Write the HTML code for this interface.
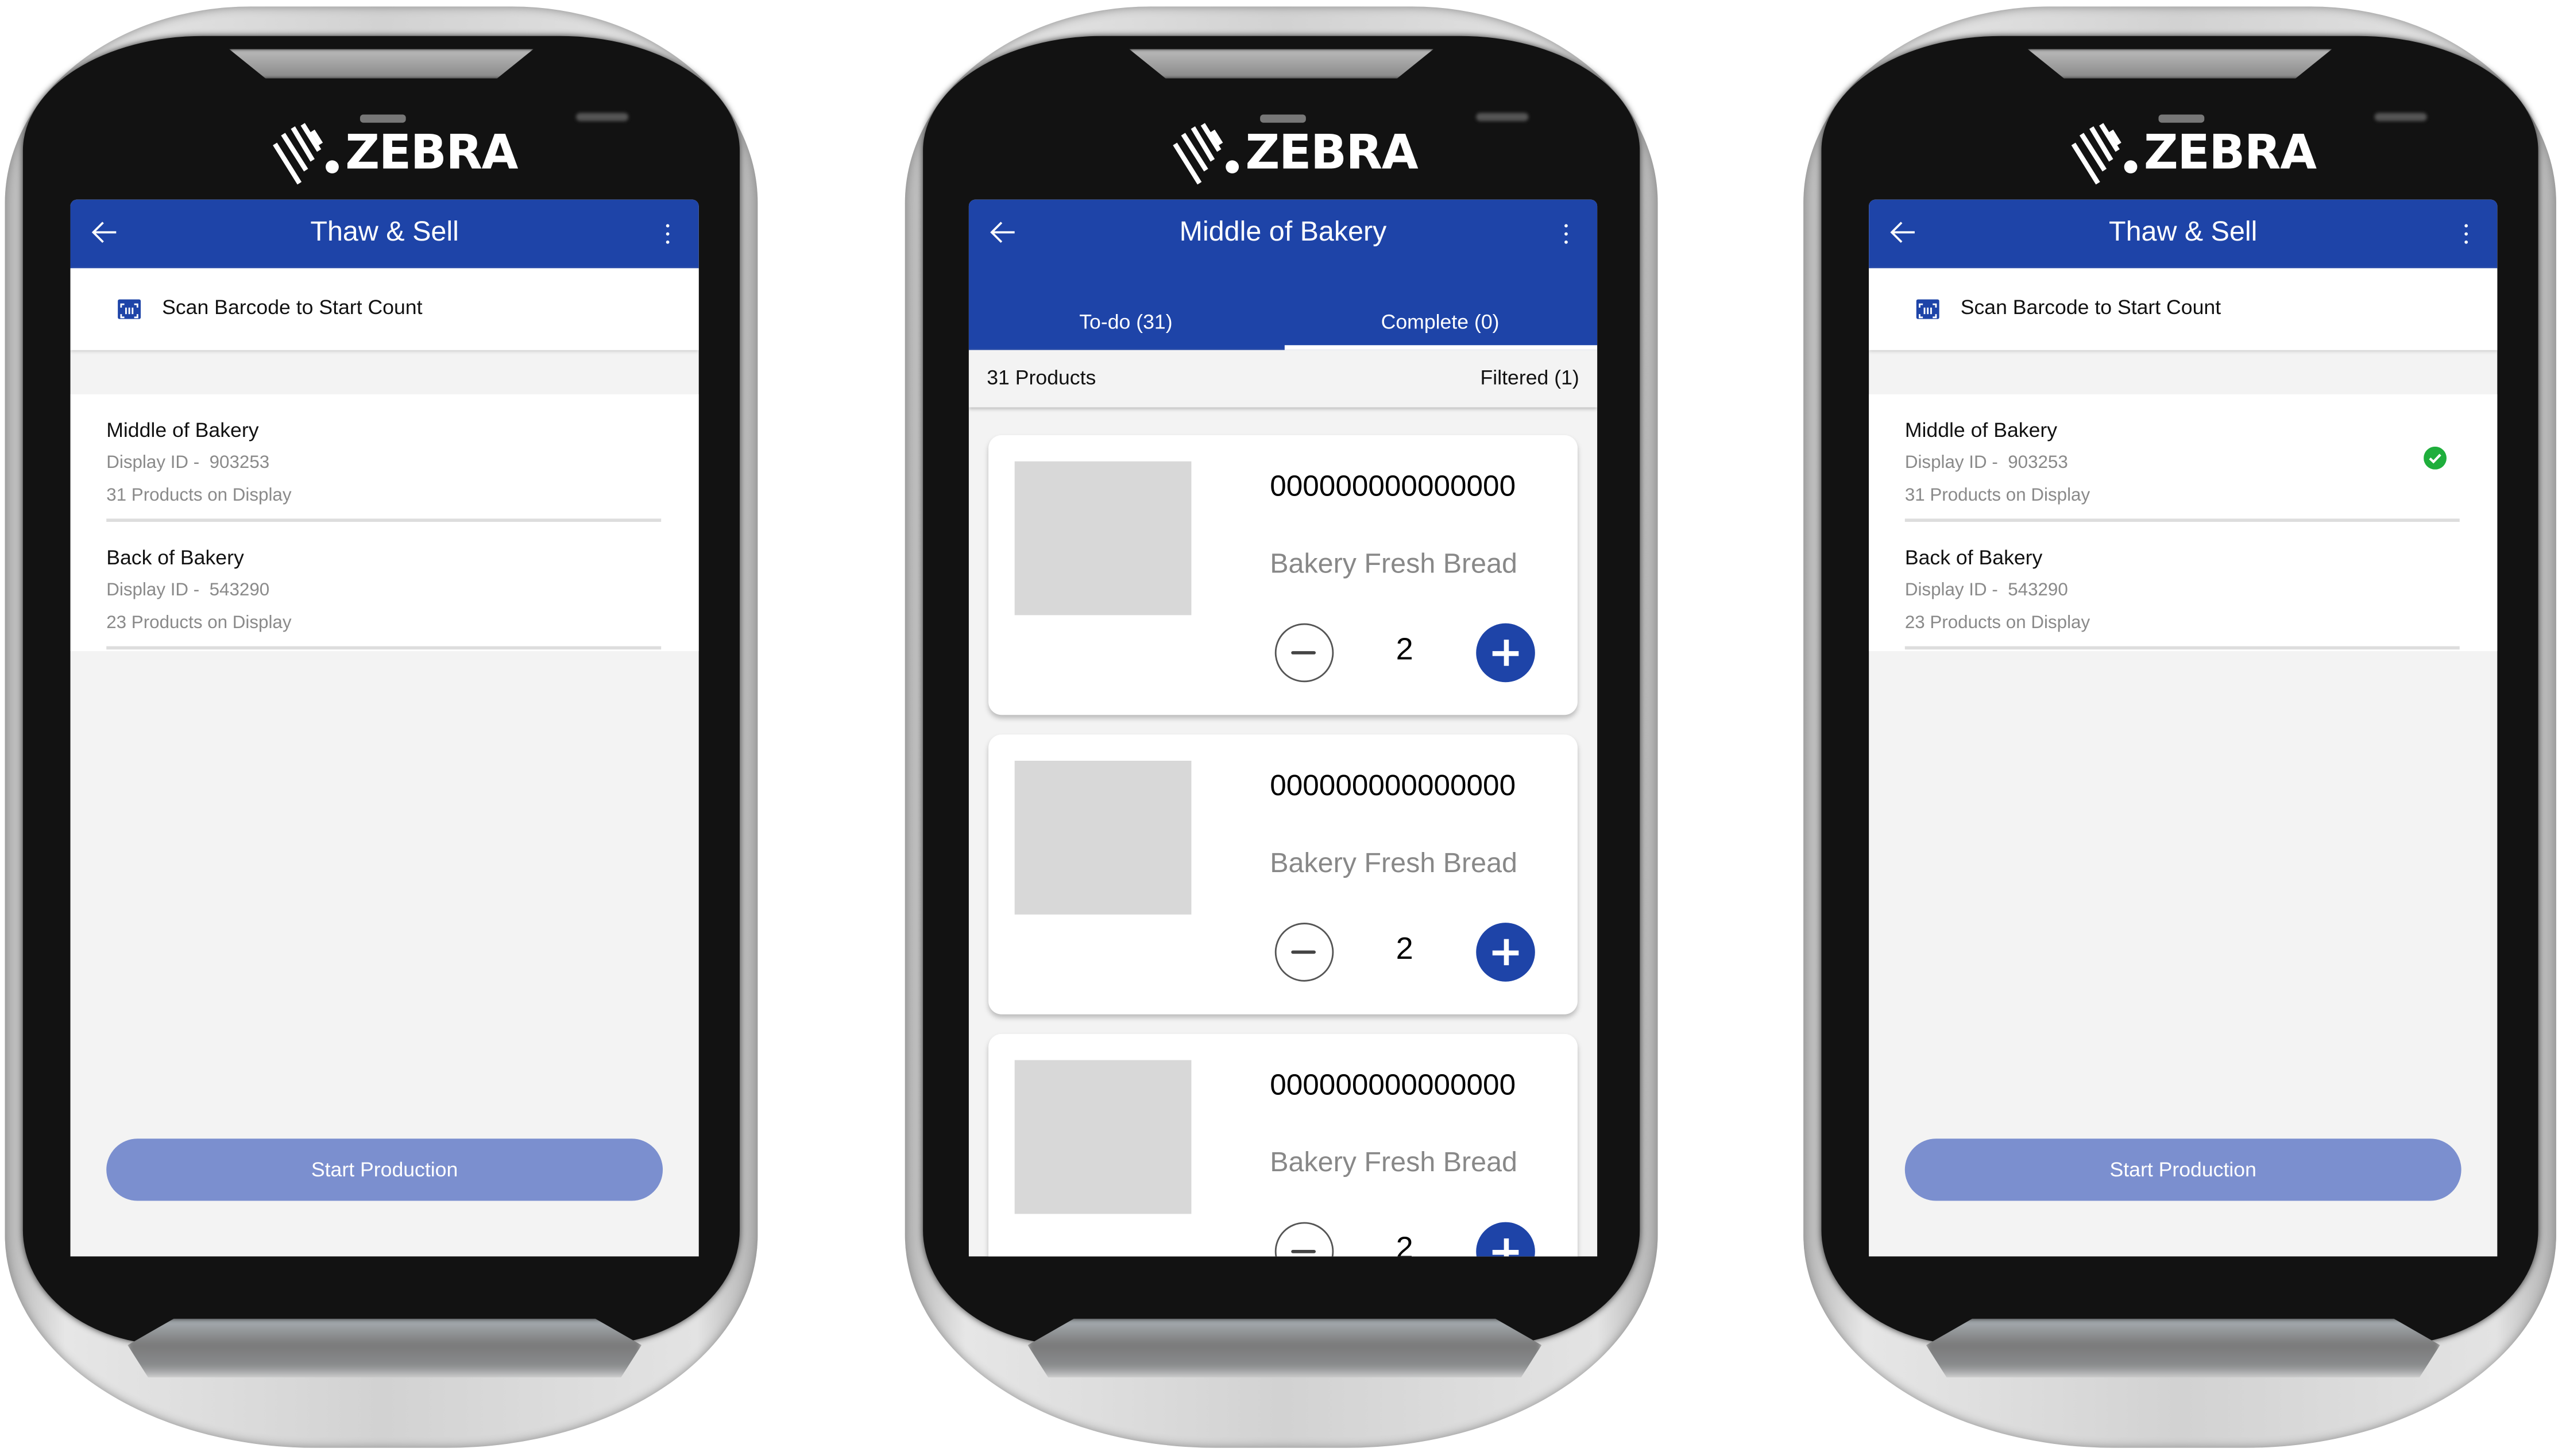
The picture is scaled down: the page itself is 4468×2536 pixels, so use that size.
<!DOCTYPE html>
<html><head><meta charset="utf-8"><style>
*{margin:0;padding:0;box-sizing:border-box}
html,body{width:4468px;height:2536px;overflow:hidden;background:#fff;font-family:"Liberation Sans",sans-serif}
#root{position:absolute;left:0;top:0;width:1568px;height:890px;transform:scale(2.8495);transform-origin:0 0}
.phone{position:absolute;top:0;width:470px;height:890px}
.body{position:absolute;left:3px;top:4px;width:460px;height:881px;border-radius:150px 150px 190px 190px/120px 120px 130px 130px;background:linear-gradient(90deg,#b5b5b5,#e6e6e6 8%,#d2d2d2 50%,#e3e3e3 92%,#b0b0b0);box-shadow:inset 0 0 6px #888}
.black{position:absolute;left:14px;top:22px;width:438px;height:800px;border-radius:110px 110px 90px 90px/70px 70px 70px 70px;background:#121212;box-shadow:0 0 4px #333}
.spk{position:absolute;left:140px;top:30px;width:186px;height:18px;background:linear-gradient(#bbb,#888);clip-path:polygon(0 0,100% 0,88% 100%,12% 100%);filter:blur(1px)}
.grill{position:absolute;left:78px;top:806px;width:314px;height:36px;background:linear-gradient(#aab0b5,#7a7a7a 45%,#8a8c8e 80%,#c8c8c8);clip-path:polygon(9% 0,91% 0,100% 45%,96% 100%,4% 100%,0 45%);filter:blur(1.5px)}
.sensor{position:absolute;left:220px;top:70px;width:28px;height:5px;background:#777;border-radius:2px}
.cam{position:absolute;left:352px;top:69px;width:32px;height:5px;background:#555;border-radius:3px;filter:blur(1px)}
.logo{position:absolute;left:165px;top:76px;color:#fff;font-weight:bold;font-size:29px;letter-spacing:-0.5px;font-family:"DejaVu Sans","Liberation Sans",sans-serif}
.logo span{position:absolute;left:46px;top:0}
.screen{position:absolute;left:43px;top:122px;width:384px;height:646px;background:#f3f3f3;overflow:hidden;border-radius:4px 4px 0 0}
.hdr{position:absolute;left:0;top:0;width:100%;height:42px;background:#1e44a8;color:#fff}
.hdr .t{position:absolute;left:0;width:100%;top:10px;text-align:center;font-size:17px}
.hdr .back{position:absolute;left:13px;top:13px}
.hdr .dots{position:absolute;right:18px;top:15px;width:2px}
.hdr .dots i{display:block;width:2px;height:2px;background:#fff;border-radius:1px;margin-bottom:3px}
.scan{position:absolute;left:0;top:42px;width:100%;height:50px;background:#fff;box-shadow:0 1px 2px #ccc}
.scan .ic{position:absolute;left:29px;top:19px;width:14px;height:12px;background:#1e44a8;border-radius:1px}
.scan .tx{position:absolute;left:56px;top:17px;font-size:12.5px;color:#111}
.list{position:absolute;left:0;top:119px;width:100%;height:157px;background:#fff}
.item{position:absolute;left:22px;width:339px;border-bottom:2px solid #ddd;height:78px}
.item .a{position:absolute;top:15px;font-size:12.5px;color:#111}
.item .b{position:absolute;top:36px;font-size:11px;color:#8a8a8a}
.item .c{position:absolute;top:56px;font-size:11px;color:#8a8a8a}
.btn{position:absolute;left:22px;top:574px;width:340px;height:38px;border-radius:19px;background:#7b8fcf;color:#fff;font-size:12.5px;text-align:center;line-height:38px}
.card{position:absolute;left:12px;width:360px;height:171px;background:#fff;border-radius:8px;box-shadow:0 2px 3px #bbb}
.card .img{position:absolute;left:16px;top:16px;width:108px;height:94px;background:#d8d8d8}
.card .n{position:absolute;left:172px;top:21px;font-size:18px;color:#000}
.card .p{position:absolute;left:172px;top:69px;font-size:17px;color:#888}
.card .m{position:absolute;left:175px;top:115px;width:36px;height:36px;border:1.5px solid #555;border-radius:50%}
.card .m:after{content:"";position:absolute;left:9px;top:15.5px;width:15px;height:2.5px;background:#444;border-radius:1px}
.card .q{position:absolute;left:249px;top:121px;font-size:19px;color:#000}
.card .pl{position:absolute;left:298px;top:115px;width:36px;height:36px;background:#1e44a8;border-radius:50%}
.card .pl:before{content:"";position:absolute;left:10px;top:16.5px;width:16px;height:3px;background:#fff}
.card .pl:after{content:"";position:absolute;left:16.5px;top:10px;width:3px;height:16px;background:#fff}
</style></head><body><div id="root">

<div class="phone" style="left:0">
 <div class="body"></div><div class="black"></div><div class="spk"></div><div class="grill"></div>
 <div class="sensor"></div><div class="cam"></div>
 <div class="logo"><svg width="44" height="40" viewBox="0 0 44 40" style="position:absolute;left:0;top:-2px"><g stroke="#fff" stroke-width="3" fill="none"><path d="M3 14 L18 38"/><path d="M8 8 L22 30"/><path d="M14 4 L26 24"/><path d="M20 2 L30 18"/><path d="M26 6 L31 14"/></g><circle cx="38" cy="28" r="4" fill="#fff"/></svg><span>ZEBRA</span></div>
 <div class="screen">
  <div class="hdr"><svg class="back" width="16" height="14" viewBox="0 0 16 14"><path d="M15 7H2M7 1L1 7l6 6" stroke="#fff" stroke-width="1.3" fill="none"/></svg><div class="t">Thaw &amp; Sell</div><div class="dots"><i></i><i></i><i></i></div></div>
  <div class="scan"><div class="ic"><svg width="14" height="12" viewBox="0 0 14 12"><path d="M2 4V2h2M10 2h2v2M12 8v2h-2M4 10H2V8" stroke="#fff" stroke-width="1" fill="none"/><path d="M5 4v4M7 4v4M9 4v4" stroke="#fff" stroke-width="1"/></svg></div><div class="tx">Scan Barcode to Start Count</div></div>
  <div class="list">
   <div class="item" style="top:0"><div class="a">Middle of Bakery</div><div class="b">Display ID -&nbsp; 903253</div><div class="c">31 Products on Display</div></div>
   <div class="item" style="top:78px"><div class="a">Back of Bakery</div><div class="b">Display ID -&nbsp; 543290</div><div class="c">23 Products on Display</div></div>
  </div>
  <div class="btn">Start Production</div>
 </div>
</div>

<div class="phone" style="left:550px">
 <div class="body"></div><div class="black"></div><div class="spk"></div><div class="grill"></div>
 <div class="sensor"></div><div class="cam"></div>
 <div class="logo"><svg width="44" height="40" viewBox="0 0 44 40" style="position:absolute;left:0;top:-2px"><g stroke="#fff" stroke-width="3" fill="none"><path d="M3 14 L18 38"/><path d="M8 8 L22 30"/><path d="M14 4 L26 24"/><path d="M20 2 L30 18"/><path d="M26 6 L31 14"/></g><circle cx="38" cy="28" r="4" fill="#fff"/></svg><span>ZEBRA</span></div>
 <div class="screen" style="left:42px">
  <div class="hdr" style="height:92px"><svg class="back" width="16" height="14" viewBox="0 0 16 14"><path d="M15 7H2M7 1L1 7l6 6" stroke="#fff" stroke-width="1.3" fill="none"/></svg><div class="t">Middle of Bakery</div><div class="dots"><i></i><i></i><i></i></div>
   <div style="position:absolute;left:0;width:192px;top:68px;text-align:center;font-size:12.5px">To-do (31)</div>
   <div style="position:absolute;left:192px;width:192px;top:68px;text-align:center;font-size:12.5px">Complete (0)</div>
   <div style="position:absolute;left:193px;width:191px;top:89px;height:3px;background:#fff"></div>
  </div>
  <div style="position:absolute;left:0;top:92px;width:100%;height:35px;background:#f3f3f3;box-shadow:0 1px 2px #bbb;font-size:12.5px;color:#111">
   <div style="position:absolute;left:11px;top:10px">31 Products</div><div style="position:absolute;right:11px;top:10px">Filtered (1)</div></div>
  <div class="card" style="top:144px"><div class="img"></div><div class="n">000000000000000</div><div class="p">Bakery Fresh Bread</div><div class="m"></div><div class="q">2</div><div class="pl"></div></div>
  <div class="card" style="top:327px"><div class="img"></div><div class="n">000000000000000</div><div class="p">Bakery Fresh Bread</div><div class="m"></div><div class="q">2</div><div class="pl"></div></div>
  <div class="card" style="top:510px"><div class="img"></div><div class="n">000000000000000</div><div class="p">Bakery Fresh Bread</div><div class="m"></div><div class="q">2</div><div class="pl"></div></div>
 </div>
</div>

<div class="phone" style="left:1099px">
 <div class="body"></div><div class="black"></div><div class="spk"></div><div class="grill"></div>
 <div class="sensor"></div><div class="cam"></div>
 <div class="logo"><svg width="44" height="40" viewBox="0 0 44 40" style="position:absolute;left:0;top:-2px"><g stroke="#fff" stroke-width="3" fill="none"><path d="M3 14 L18 38"/><path d="M8 8 L22 30"/><path d="M14 4 L26 24"/><path d="M20 2 L30 18"/><path d="M26 6 L31 14"/></g><circle cx="38" cy="28" r="4" fill="#fff"/></svg><span>ZEBRA</span></div>
 <div class="screen">
  <div class="hdr"><svg class="back" width="16" height="14" viewBox="0 0 16 14"><path d="M15 7H2M7 1L1 7l6 6" stroke="#fff" stroke-width="1.3" fill="none"/></svg><div class="t">Thaw &amp; Sell</div><div class="dots"><i></i><i></i><i></i></div></div>
  <div class="scan"><div class="ic"><svg width="14" height="12" viewBox="0 0 14 12"><path d="M2 4V2h2M10 2h2v2M12 8v2h-2M4 10H2V8" stroke="#fff" stroke-width="1" fill="none"/><path d="M5 4v4M7 4v4M9 4v4" stroke="#fff" stroke-width="1"/></svg></div><div class="tx">Scan Barcode to Start Count</div></div>
  <div class="list">
   <div class="item" style="top:0"><div class="a">Middle of Bakery</div><div class="b">Display ID -&nbsp; 903253</div><div class="c">31 Products on Display</div>
    <svg width="14" height="14" viewBox="0 0 14 14" style="position:absolute;left:317px;top:32px"><circle cx="7" cy="7" r="7" fill="#1fae3c"/><path d="M3.8 7.2l2.2 2.1 4.2-4.4" stroke="#fff" stroke-width="1.5" fill="none"/></svg></div>
   <div class="item" style="top:78px"><div class="a">Back of Bakery</div><div class="b">Display ID -&nbsp; 543290</div><div class="c">23 Products on Display</div></div>
  </div>
  <div class="btn">Start Production</div>
 </div>
</div>

</div></body></html>
